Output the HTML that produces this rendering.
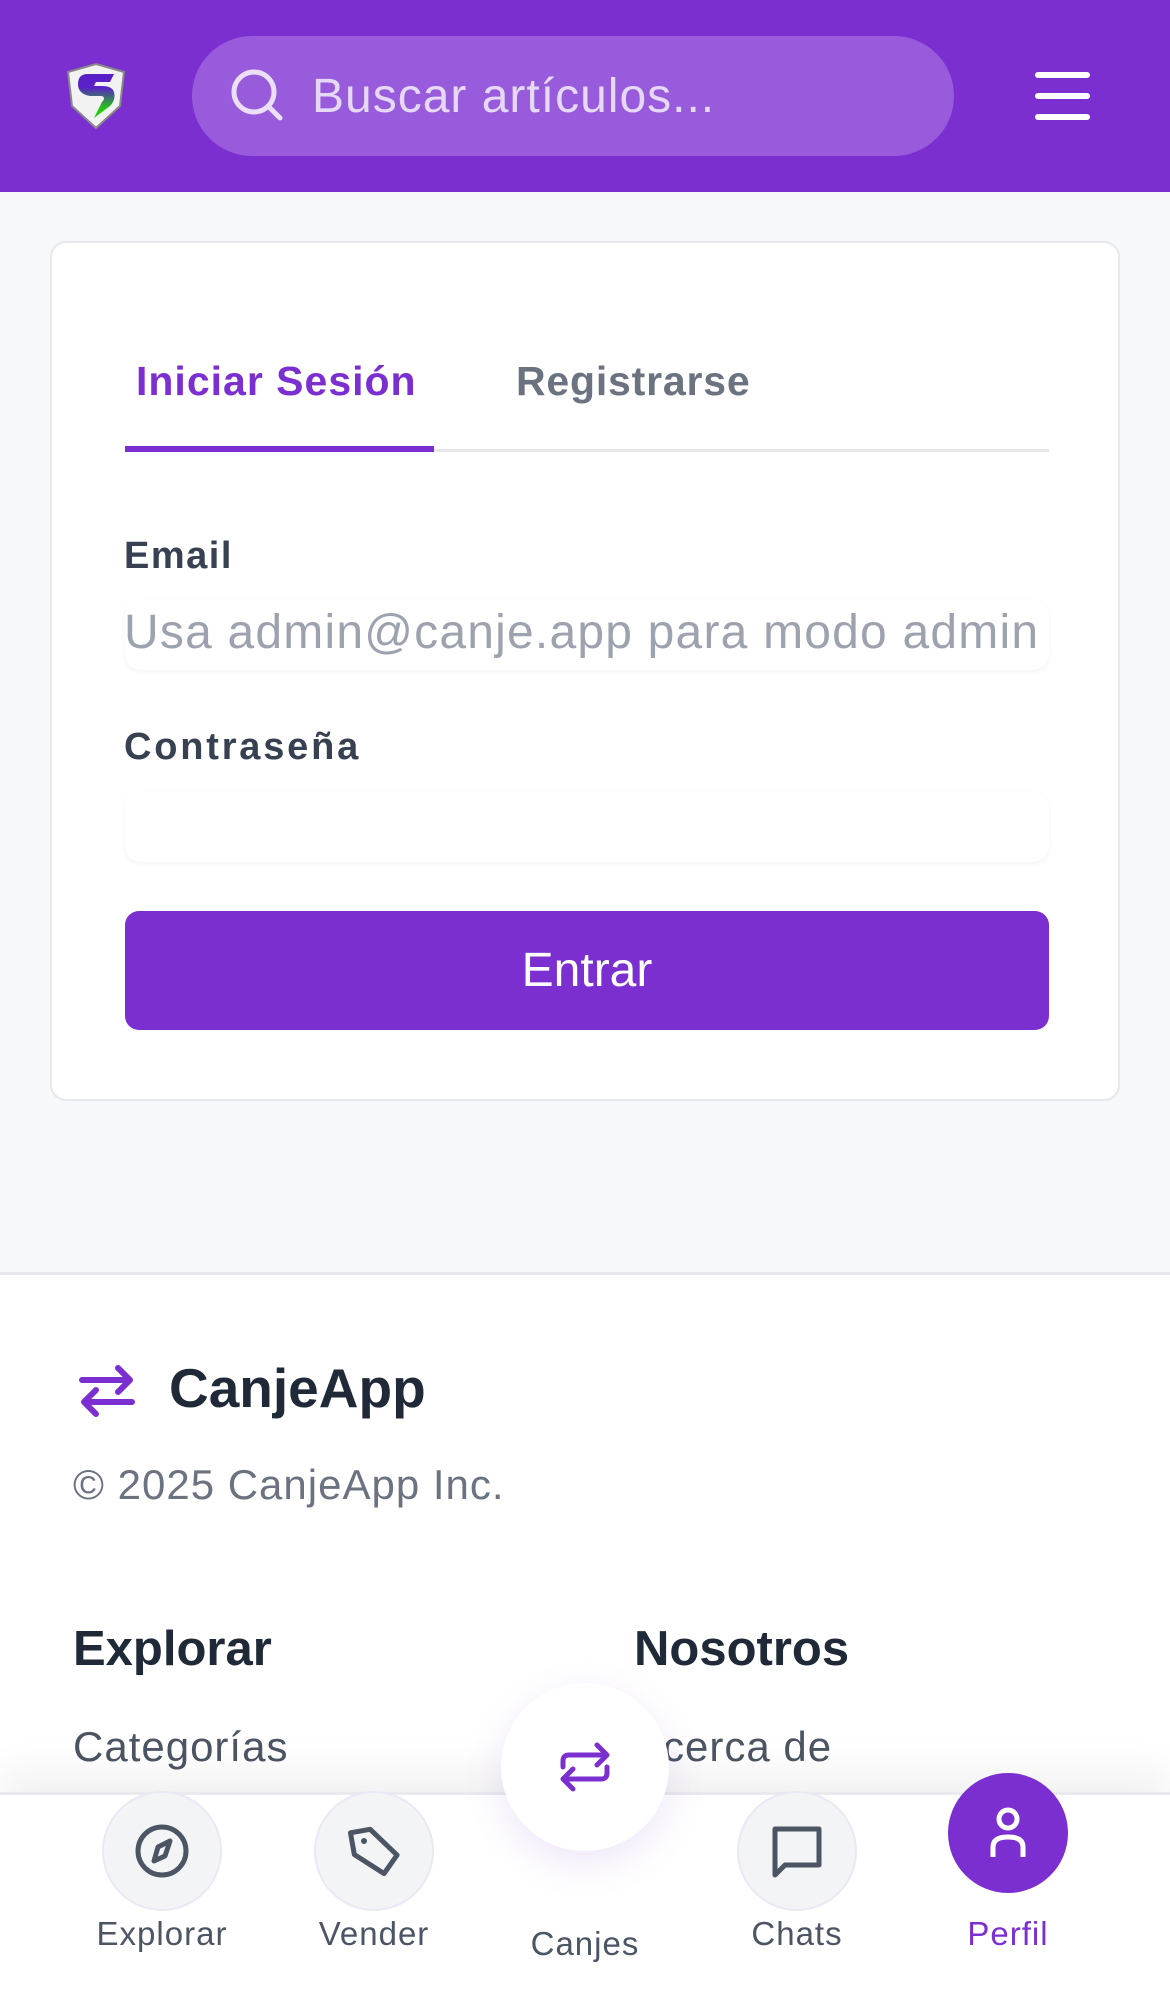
<!DOCTYPE html>
<html><head><meta charset="utf-8"><style>
*{margin:0;padding:0;box-sizing:border-box}
body{width:1170px;height:1992px;overflow:hidden;background:#f7f8fa;font-family:"Liberation Sans",sans-serif;position:relative}
.hdr{position:absolute;left:0;top:0;width:1170px;height:192px;background:#7b2fd0}
.search{position:absolute;left:192px;top:36px;width:762px;height:120px;border-radius:60px;background:#975bdb}
.search span{position:absolute;left:120px;top:33px;font-size:48px;color:#e6d8f7;letter-spacing:1px}
.card{position:absolute;left:50px;top:241px;width:1070px;height:860px;background:#fff;border:2px solid #e7e8ec;border-radius:16px}
.abs{position:absolute}
.input{position:absolute;left:73px;width:924px;height:70px;background:#fff;border-radius:16px;box-shadow:0 2px 6px rgba(0,0,0,.05)}
.btn{position:absolute;left:73px;top:668px;width:924px;height:119px;background:#7b2fd0;border-radius:14px;color:#fff;font-size:48px;text-align:center;line-height:119px}
.foot{position:absolute;left:0;top:1272px;width:1170px;height:720px;background:#fff;border-top:3px solid #e5e7eb}
.nav{position:absolute;left:0;top:1792px;width:1170px;height:200px;background:#fff;border-top:3px solid #e9e9ee;box-shadow:0 -20px 40px rgba(0,0,0,.06)}
.it{position:absolute;width:120px;height:120px;border-radius:60px;background:#f3f4f6;border:2px solid #ebe8f5;display:flex;align-items:center;justify-content:center}
.lbl{position:absolute;font-size:33px;color:#4b5563;text-align:center;width:200px;letter-spacing:1px}
</style></head><body>
<div class="hdr">
 <svg class="abs" style="left:64px;top:62px" width="64" height="68" viewBox="0 0 64 68"><path d="M32 2 L60 10 L56 44 L32 66 L8 44 L4 10Z" fill="#f2f2f2" stroke="#888" stroke-width="2"/><defs><linearGradient id="g" x1="0" y1="0" x2="0" y2="1"><stop offset="0.3" stop-color="#5a20c8"/><stop offset="0.8" stop-color="#22cc10"/></linearGradient></defs><path d="M50 12 H24 Q14 12 14 22 Q14 32 26 34 H38 Q42 36 38 40 L30 56 L46 44 Q52 38 50 30 Q48 24 38 24 H30 L32 20 H46Z" fill="url(#g)"/></svg>
 <div class="search"><svg class="abs" style="left:38px;top:32px" width="56" height="56" viewBox="0 0 56 56"><circle cx="24" cy="24" r="20" fill="none" stroke="#ecdff9" stroke-width="5"/><path d="M38 38 L50 50" stroke="#ecdff9" stroke-width="5" stroke-linecap="round"/></svg><span>Buscar artículos...</span></div>
 <div class="abs" style="left:1035px;top:72px;width:55px;height:6px;background:#fff;border-radius:3px"></div>
 <div class="abs" style="left:1035px;top:93px;width:55px;height:6px;background:#fff;border-radius:3px"></div>
 <div class="abs" style="left:1035px;top:114px;width:55px;height:6px;background:#fff;border-radius:3px"></div>
</div>
<div class="card">
 <div class="abs" style="left:84px;top:115px;font-size:41px;color:#7b2fd0;font-weight:bold;letter-spacing:1px">Iniciar Sesión</div>
 <div class="abs" style="left:464px;top:115px;font-size:41px;color:#6b7280;font-weight:bold;letter-spacing:0.8px">Registrarse</div>
 <div class="abs" style="left:73px;top:206px;width:924px;height:3px;background:#e5e7eb"></div>
 <div class="abs" style="left:73px;top:203px;width:309px;height:6px;background:#7b2fd0"></div>
 <div class="abs" style="left:72px;top:292px;font-size:38px;color:#374151;font-weight:bold;letter-spacing:1.5px">Email</div>
 <div class="input" style="top:357px"></div>
 <div class="abs" style="left:72px;top:362px;font-size:48px;color:#9ca3af;white-space:nowrap;letter-spacing:1.2px">Usa admin@canje.app para modo admin</div>
 <div class="abs" style="left:72px;top:483px;font-size:38px;color:#374151;font-weight:bold;letter-spacing:2.8px">Contraseña</div>
 <div class="input" style="top:549px"></div>
 <div class="btn">Entrar</div>
</div>
<div class="foot">
 <svg class="abs" style="left:76px;top:85px" width="62" height="62" viewBox="0 0 62 62"><g fill="none" stroke="#7b2fd0" stroke-width="6" stroke-linecap="round" stroke-linejoin="round"><path d="M6 20 H54 M42 8 L54 20 L42 32"/><path d="M56 42 H8 M20 30 L8 42 L20 54"/></g></svg>
 <div class="abs" style="left:169px;top:81px;font-size:55px;font-weight:bold;color:#1f2937">CanjeApp</div>
 <div class="abs" style="left:73px;top:186px;font-size:42px;color:#6b7280;letter-spacing:1px">© 2025 CanjeApp Inc.</div>
 <div class="abs" style="left:73px;top:346px;font-size:49px;font-weight:bold;color:#1f2937">Explorar</div>
 <div class="abs" style="left:634px;top:346px;font-size:49px;font-weight:bold;color:#1f2937">Nosotros</div>
 <div class="abs" style="left:73px;top:448px;font-size:42px;color:#4b5563;letter-spacing:1px">Categorías</div>
 <div class="abs" style="left:634px;top:448px;font-size:42px;color:#4b5563;letter-spacing:1px">Acerca de</div>
</div>
<div class="nav">
 <div class="it" style="left:102px;top:-4px"><svg width="60" height="60" viewBox="0 0 60 60"><circle cx="30" cy="30" r="24" fill="none" stroke="#4b5563" stroke-width="5"/><path d="M38 20 L33 35 L22 40 L26 26Z" fill="none" stroke="#4b5563" stroke-width="5" stroke-linejoin="round"/></svg></div>
 <div class="it" style="left:314px;top:-4px"><svg width="60" height="60" viewBox="0 0 60 60"><path d="M10 8 H30 L52 38 L36 54 L10 30Z" fill="none" stroke="#4b5563" stroke-width="5" stroke-linejoin="round" transform="rotate(-10 30 30)"/><circle cx="20" cy="20" r="3" fill="#4b5563"/></svg></div>
 <div class="it" style="left:737px;top:-4px"><svg width="60" height="60" viewBox="0 0 60 60"><path d="M8 8 H52 V44 H18 L8 54Z" fill="none" stroke="#4b5563" stroke-width="5" stroke-linejoin="round"/></svg></div>
 <div class="abs" style="left:948px;top:-22px;width:120px;height:120px;border-radius:60px;background:#7b2fd0;display:flex;align-items:center;justify-content:center"><svg width="50" height="60" viewBox="0 0 50 60"><circle cx="25" cy="16" r="9" fill="none" stroke="#fff" stroke-width="5"/><path d="M10 54 V44 Q10 34 25 34 Q40 34 40 44 V54" fill="none" stroke="#fff" stroke-width="5"/></svg></div>
 <div class="lbl" style="left:62px;top:120px">Explorar</div>
 <div class="lbl" style="left:274px;top:120px">Vender</div>
 <div class="lbl" style="left:485px;top:130px">Canjes</div>
 <div class="lbl" style="left:697px;top:120px">Chats</div>
 <div class="lbl" style="left:908px;top:120px;color:#7b2fd0">Perfil</div>
</div>
<div class="abs" style="left:501px;top:1683px;width:168px;height:168px;border-radius:84px;background:#fff;box-shadow:0 12px 40px rgba(123,47,208,.12);display:flex;align-items:center;justify-content:center"><svg width="60" height="60" viewBox="0 0 60 60"><g fill="none" stroke="#7b2fd0" stroke-width="5" stroke-linecap="round" stroke-linejoin="round"><path d="M8 30 V24 Q8 18 14 18 H52 M42 8 L52 18 L42 28"/><path d="M52 30 V36 Q52 42 46 42 H8 M18 32 L8 42 L18 52"/></g></svg></div>
</body></html>
